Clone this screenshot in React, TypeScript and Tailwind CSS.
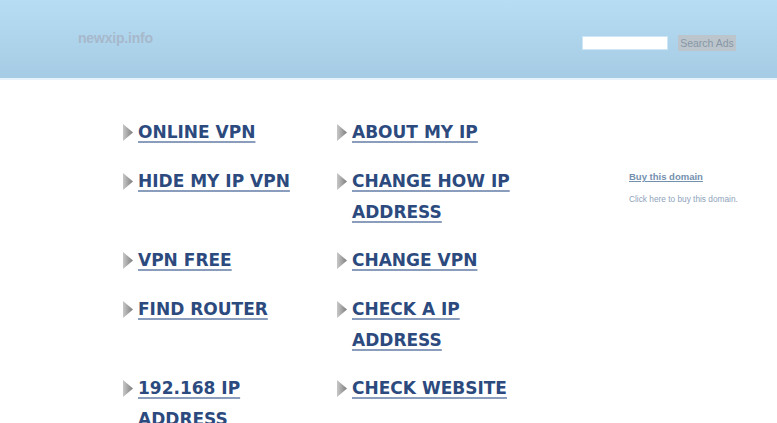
import React from "react";

const rows: [string, string][] = [
  ["ONLINE VPN", "ABOUT MY IP"],
  ["HIDE MY IP VPN", "CHANGE HOW IP ADDRESS"],
  ["VPN FREE", "CHANGE VPN"],
  ["FIND ROUTER", "CHECK A IP ADDRESS"],
  ["192.168 IP ADDRESS", "CHECK WEBSITE"],
];

function Arrow() {
  return (
    <svg width="10" height="17" viewBox="0 0 10 17" className="mt-[7px] shrink-0">
      <defs>
        <linearGradient id="arr" x1="0" y1="0" x2="1" y2="0">
          <stop offset="0" stopColor="#c8c8c8" />
          <stop offset="1" stopColor="#7d7d7d" />
        </linearGradient>
      </defs>
      <polygon points="0,0 10,8.5 0,17" fill="url(#arr)" />
    </svg>
  );
}

function LinkItem({ label }: { label: string }) {
  return (
    <div className="flex gap-[5px]">
      <Arrow />
      <a
        href="#"
        className="block w-[175px] text-[17px] leading-[31px] font-bold text-[#2c4a7e] underline decoration-[#8a9dbd] decoration-2 underline-offset-[3px]"
        style={{ fontFamily: '"DejaVu Sans", Verdana, sans-serif' }}
      >
        {label}
      </a>
    </div>
  );
}

export default function App() {
  return (
    <div className="w-[777px] h-[423px] overflow-hidden bg-white" style={{ fontFamily: '"Liberation Sans", Arial, sans-serif' }}>
      <div className="h-[78px] bg-gradient-to-b from-[#b6ddf3] to-[#a6cce5] flex items-start">
        <div className="pl-[78px] pt-[28px] text-[14px] font-bold text-[#a7b8cb] tracking-[-0.2px]">newxip.info</div>
        <div className="ml-auto mr-[41px] pt-[35px] flex items-center gap-[10px]">
          <input className="w-[86px] h-[14px] bg-white border border-[#cfe6f6] outline-none" />
          <button className="w-[58px] h-[16px] bg-[#bcc5cb] text-[10.5px] leading-[16px] text-[#8797a8]">Search Ads</button>
        </div>
      </div>
      <div className="h-[2px] bg-[#e6f3fa]" />
      <div className="flex pl-[123px] pt-[37px]">
        <div className="grid grid-cols-[190px_190px] gap-x-[24px] gap-y-[17.5px] content-start">
          {rows.map(([a, b]) => (
            <React.Fragment key={a}>
              <LinkItem label={a} />
              <LinkItem label={b} />
            </React.Fragment>
          ))}
        </div>
        <div className="ml-[102px] pt-[53px]">
          <a href="#" className="block text-[9.5px] font-bold text-[#7390ae] underline">Buy this domain</a>
          <div className="mt-[9px] text-[8.3px] text-[#8ea3bb]">Click here to buy this domain.</div>
        </div>
      </div>
    </div>
  );
}
